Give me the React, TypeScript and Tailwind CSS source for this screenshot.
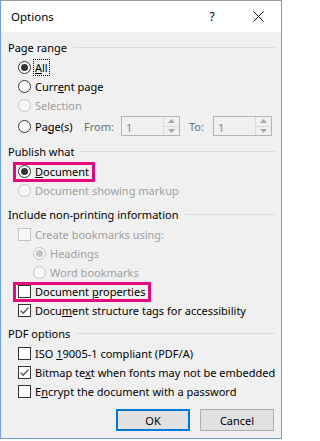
import type { ReactNode } from "react";

// Word "Options" dialog for Save as PDF

const ui = "font-['Segoe_UI','Noto_Sans',sans-serif] text-[11px] leading-none";

function Radio({ checked = false, disabled = false }: { checked?: boolean; disabled?: boolean }) {
    return (
        <span
            className={`flex h-[13px] w-[13px] shrink-0 items-center justify-center rounded-full border ${
                disabled ? "border-[#c4c4c4] bg-[#f7f7f7]" : "border-[#333333] bg-white"
            }`}
        >
            {checked && (
                <span className={`h-[7px] w-[7px] rounded-full ${disabled ? "bg-[#c4c4c4]" : "bg-[#333333]"}`} />
            )}
        </span>
    );
}

function Checkbox({ checked = false, disabled = false }: { checked?: boolean; disabled?: boolean }) {
    return (
        <span
            className={`flex h-[13px] w-[13px] shrink-0 items-center justify-center border ${
                disabled ? "border-[#c4c4c4] bg-[#f7f7f7]" : "border-[#333333] bg-white"
            }`}
        >
            {checked && (
                <svg width="11" height="11" viewBox="0 0 11 11">
                    <path d="M1.5 5.5 L4.2 8.2 L9.5 2.5" fill="none" stroke="#555555" strokeWidth="1.3" />
                </svg>
            )}
        </span>
    );
}

function Header({ label, className = "" }: { label: string; className?: string }) {
    return (
        <div className={`flex h-[22px] items-center ${className}`}>
            <span className="text-black">{label}</span>
            <span className="ml-[6px] h-px flex-1 bg-[#dcdcdc]" />
        </div>
    );
}

function Row({ children, indent = false }: { children: ReactNode; indent?: boolean }) {
    return (
        <div className={`flex h-[19px] items-center ${indent ? "pl-[25px]" : "pl-[10px]"}`}>{children}</div>
    );
}

function Label({ children, disabled = false }: { children: ReactNode; disabled?: boolean }) {
    return <span className={`ml-[4px] whitespace-nowrap ${disabled ? "text-[#a0a0a0]" : "text-black"}`}>{children}</span>;
}

function Highlight({ children }: { children: ReactNode }) {
    return (
        <span className="relative flex h-full items-center">
            {children}
            <span className="pointer-events-none absolute -left-[5px] -right-[6px] top-0 -bottom-[1px] border-[3px] border-[#e5097f]" />
        </span>
    );
}

function Spin() {
    return (
        <div className="flex h-[20px] w-[59px] border border-[#b5b5b5] bg-[#f0f0f0]">
            <span className="flex flex-1 items-center pl-[4px] pt-[2px] text-[#8a8a8a]">1</span>
            <div className="flex w-[16px] flex-col border-l border-[#dadada]">
                <span className="flex flex-1 items-center justify-center border-b border-[#dadada]">
                    <svg width="7" height="4" viewBox="0 0 7 4">
                        <path d="M0 4 L3.5 0 L7 4 Z" fill="#a8a8a8" />
                    </svg>
                </span>
                <span className="flex flex-1 items-center justify-center">
                    <svg width="7" height="4" viewBox="0 0 7 4">
                        <path d="M0 0 L3.5 4 L7 0 Z" fill="#a8a8a8" />
                    </svg>
                </span>
            </div>
        </div>
    );
}

export default function App() {
    return (
        <div className={`h-[441px] w-[283px] overflow-hidden bg-white ${ui}`}>
            <div className="flex h-[439px] w-[282px] flex-col border border-t-[#9a9a9a] border-x-[#6f9fe0] border-b-[#6f9fe0] bg-[#f0f0f0]">
                {/* title bar */}
                <div className="flex h-[31px] shrink-0 items-center bg-white">
                    <span className="pl-[10px] text-[11.5px] text-black">Options</span>
                    <span className="ml-auto flex w-[46px] items-center justify-center text-[12px] text-black">?</span>
                    <span className="flex w-[46px] items-center justify-center">
                        <svg width="11" height="11" viewBox="0 0 11 11">
                            <path d="M0.5 0.5 L10.5 10.5 M10.5 0.5 L0.5 10.5" stroke="#111111" strokeWidth="1" />
                        </svg>
                    </span>
                </div>

                {/* body */}
                <div className="flex flex-1 flex-col pl-[7px] pr-[6px] pt-[4px]">
                    <Header label="Page range" />
                    <Row>
                        <Radio checked />
                        <span className="ml-[2px] border border-dotted border-black px-[1px] py-[2px] text-black">
                            <u>A</u>ll
                        </span>
                    </Row>
                    <Row>
                        <Radio />
                        <Label>
                            Curr<u>e</u>nt page
                        </Label>
                    </Row>
                    <Row>
                        <Radio disabled />
                        <Label disabled>Selection</Label>
                    </Row>
                    <div className="flex h-[22px] items-center pl-[10px]">
                        <div className="flex w-[66px] items-center">
                            <Radio />
                            <Label>
                                Pa<u>g</u>e(s)
                            </Label>
                        </div>
                        <span className="w-[37px] text-[#6d6d6d]">From:</span>
                        <Spin />
                        <span className="ml-[9px] w-[24px] text-[#6d6d6d]">To:</span>
                        <Spin />
                    </div>

                    <Header label="Publish what" className="mt-[3px]" />
                    <Row>
                        <Highlight>
                            <Radio checked />
                            <Label>
                                <u>D</u>ocument
                            </Label>
                        </Highlight>
                    </Row>
                    <Row>
                        <Radio disabled />
                        <Label disabled>Document showing markup</Label>
                    </Row>

                    <Header label="Include non-printing information" className="mt-[3px]" />
                    <Row>
                        <Checkbox disabled />
                        <Label disabled>Create bookmarks using:</Label>
                    </Row>
                    <Row indent>
                        <Radio checked disabled />
                        <Label disabled>Headings</Label>
                    </Row>
                    <Row indent>
                        <Radio disabled />
                        <Label disabled>Word bookmarks</Label>
                    </Row>
                    <Row>
                        <Highlight>
                            <Checkbox />
                            <Label>
                                Document <u>p</u>roperties
                            </Label>
                        </Highlight>
                    </Row>
                    <Row>
                        <Checkbox checked />
                        <Label>
                            Docu<u>m</u>ent structure tags for accessibility
                        </Label>
                    </Row>

                    <Header label="PDF options" className="mt-[2px]" />
                    <Row>
                        <Checkbox />
                        <Label>
                            ISO <u>1</u>9005-1 compliant (PDF/A)
                        </Label>
                    </Row>
                    <Row>
                        <Checkbox checked />
                        <Label>
                            Bitmap te<u>x</u>t when fonts may not be embedded
                        </Label>
                    </Row>
                    <Row>
                        <Checkbox />
                        <Label>
                            E<u>n</u>crypt the document with a password
                        </Label>
                    </Row>

                    <div className="mt-[8px] flex justify-end gap-[10px] pr-[1px]">
                        <button className="h-[22px] w-[74px] border-2 border-[#0078d7] bg-[#e1e1e1] text-black">OK</button>
                        <button className="h-[22px] w-[74px] border border-[#adadad] bg-[#e1e1e1] text-black">Cancel</button>
                    </div>
                </div>
            </div>
        </div>
    );
}
